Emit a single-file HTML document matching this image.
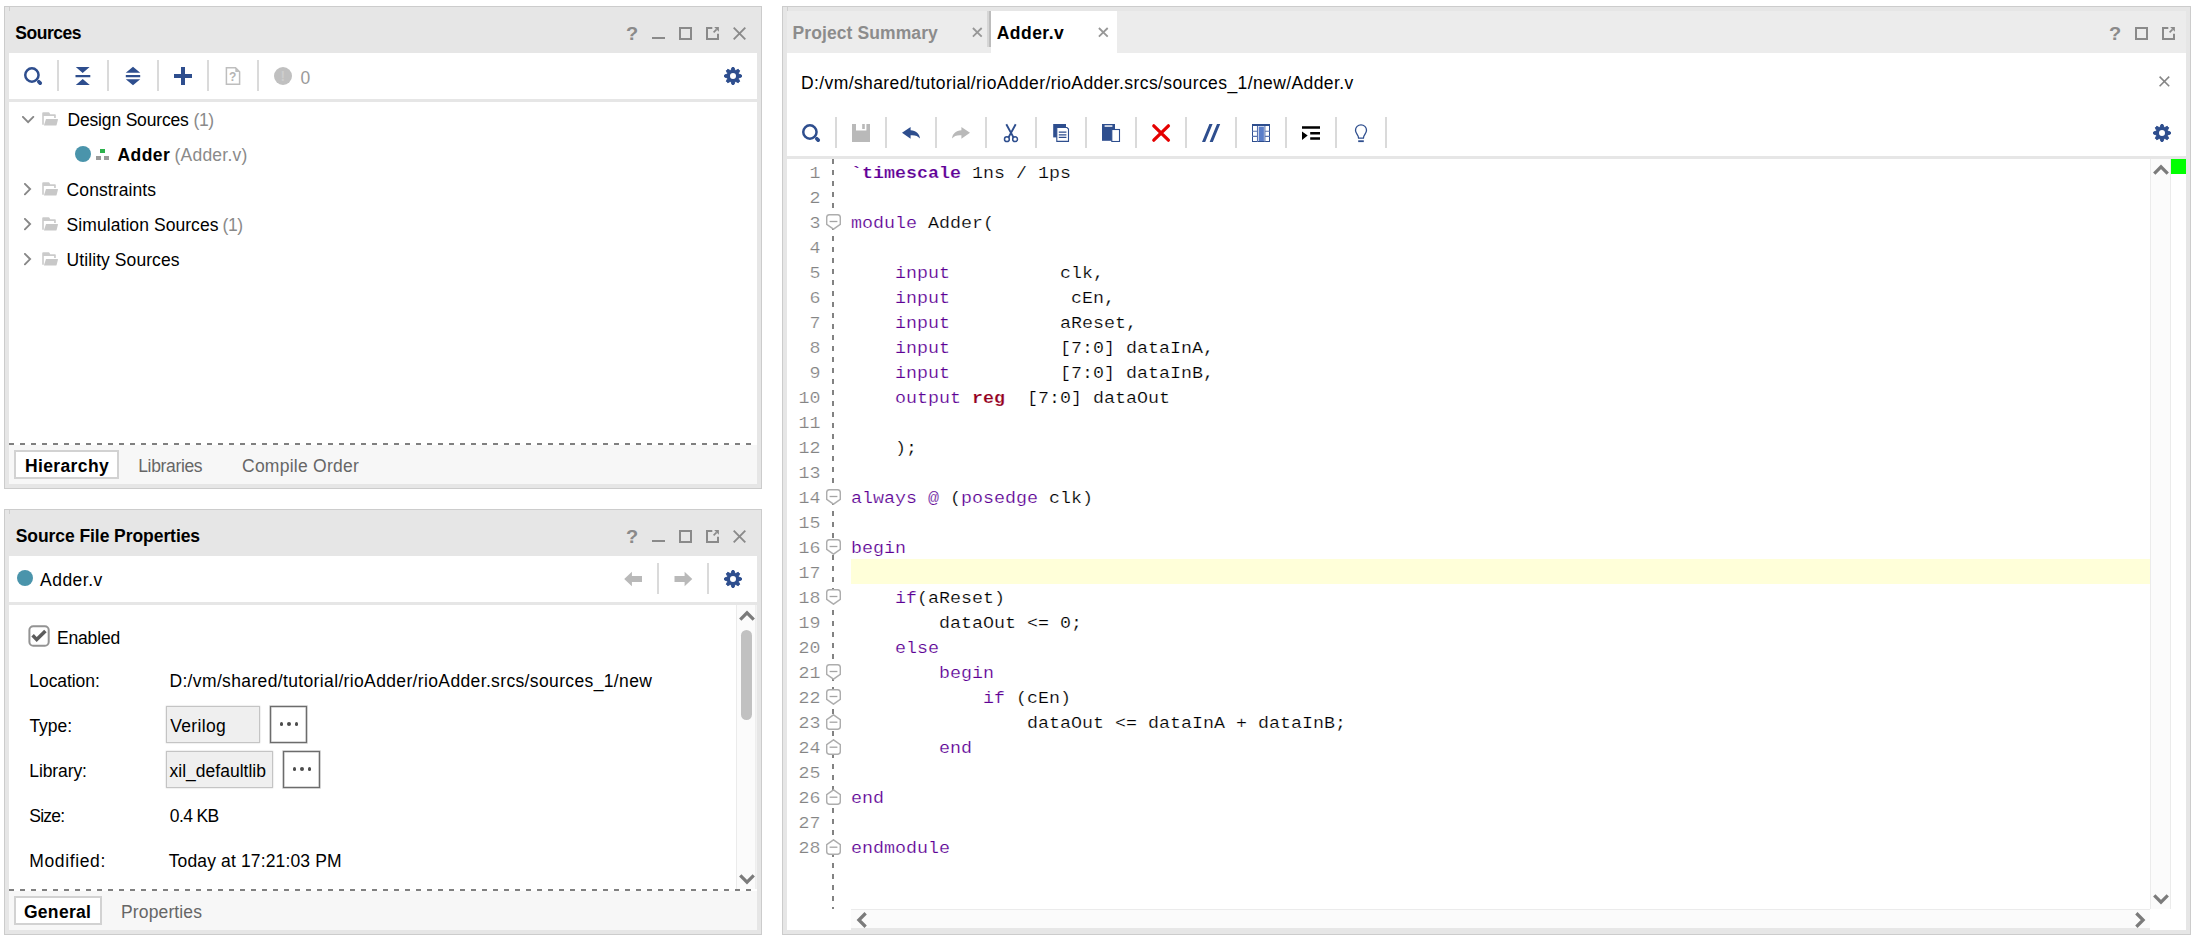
<!DOCTYPE html>
<html><head><meta charset="utf-8"><title>Vivado</title><style>
html,body{margin:0;padding:0;background:#fff}
body{width:2194px;height:942px;position:relative;overflow:hidden;font-family:"Liberation Sans", sans-serif;font-size:17.5px}
.panel{position:absolute;box-sizing:border-box;border:1px solid #cccccc;background:#e6e6e6}
.t{position:absolute;white-space:pre;line-height:24px;font-size:17.5px}
.q{position:absolute;font-weight:bold;font-size:18.5px;line-height:21px;color:#8a8a8a;width:14px;text-align:center;transform:scaleX(1.08)}
.hdash{position:absolute;height:2px;background:repeating-linear-gradient(90deg,#808080 0,#808080 5px,transparent 5px,transparent 11px)}
.vdash{position:absolute;left:832px;top:159px;width:2px;height:750px;background:repeating-linear-gradient(180deg,#828282 0,#828282 5px,transparent 5px,transparent 11px)}
.cl{margin:0;position:absolute;white-space:pre;font-family:"Liberation Mono", monospace;font-size:18.333px;line-height:20px;height:20px;transform:scaleY(0.86);transform-origin:0 0;-webkit-text-stroke:0.22px #fff}
.ln{left:787.5px;width:33px;text-align:right;color:#848484}
.code{left:851px;color:#000}
.k{color:#5c0094}
.kb{color:#5f0096;font-weight:bold;-webkit-text-stroke:0.2px #fff}
.r{color:#94001f;font-weight:bold;-webkit-text-stroke:0.2px #fff}
</style></head>
<body>
<div class="panel" style="left:4px;top:6px;width:758px;height:483px"></div>
<div style="position:absolute;left:9px;top:53px;width:748px;height:46px;background:#fff;"></div>
<div style="position:absolute;left:9px;top:102px;width:748px;height:343px;background:#fff;"></div>
<div style="position:absolute;left:9px;top:445px;width:748px;height:39px;background:#f7f7f7;"></div>
<div class="hdash" style="left:9px;top:443px;width:748px"></div>
<div style="position:absolute;left:14px;top:450px;width:105px;height:29px;background:#fff;box-sizing:border-box;border:2px solid #d2d2d2"></div>
<div style="position:absolute;left:9px;top:7px;width:1px;height:4px;background:#cfcfcf;"></div>
<div class="q" style="left:624.5px;top:23px">?</div>
<div style="position:absolute;left:652px;top:37.25px;width:13px;height:2px;background:#8a8a8a"></div>
<div style="position:absolute;left:679px;top:27px;width:13px;height:13px;box-sizing:border-box;border:2px solid #8a8a8a"></div>
<svg style="position:absolute;left:706px;top:27px" width="14" height="14" viewBox="0 0 14 14"><path d="M6.3 1H1V12H12V6.7" fill="none" stroke="#8a8a8a" stroke-width="2"/><path d="M7.6 5.4L10.6 2.4" stroke="#8a8a8a" stroke-width="1.7" fill="none"/><path d="M8.2 0.1H12.9V4.8Z" fill="#8a8a8a"/></svg>
<svg style="position:absolute;left:733px;top:27px" width="14" height="14" viewBox="0 0 14 14"><path d="M0.7 0.7L12.3 12.3M12.3 0.7L0.7 12.3" stroke="#8a8a8a" stroke-width="1.9" fill="none"/></svg>
<svg style="position:absolute;left:24px;top:67px" width="19" height="19" viewBox="0 0 19 19"><circle cx="7.9" cy="8" r="6.65" fill="none" stroke="#2e4e8e" stroke-width="2.5"/><path d="M14.8 14.7L16.2 16.1" stroke="#2e4e8e" stroke-width="3.7" stroke-linecap="round"/></svg>
<div style="position:absolute;left:57.0px;top:60.0px;width:2px;height:31.0px;background:#dadada"></div>
<div style="position:absolute;left:107.0px;top:60.0px;width:2px;height:31.0px;background:#dadada"></div>
<div style="position:absolute;left:157.0px;top:60.0px;width:2px;height:31.0px;background:#dadada"></div>
<div style="position:absolute;left:207.0px;top:60.0px;width:2px;height:31.0px;background:#dadada"></div>
<div style="position:absolute;left:257.0px;top:60.0px;width:2px;height:31.0px;background:#dadada"></div>
<svg style="position:absolute;left:75px;top:66px" width="16" height="20" viewBox="0 0 16 20"><path d="M0.8 1H14.6L7.7 7Z M0.5 9H15.3V11.2H0.5Z M7.7 13L14.8 19H0.8Z" fill="#2e4e8e"/></svg>
<svg style="position:absolute;left:125px;top:66px" width="16" height="20" viewBox="0 0 16 20"><path d="M8 0.8L15.2 6.8H0.8Z M0.8 9H15.2V11.2H0.8Z M0.8 13.2H15.2L8 19.2Z" fill="#2e4e8e"/></svg>
<svg style="position:absolute;left:174px;top:67px" width="18" height="18" viewBox="0 0 18 18"><path d="M7 0H11V7H18V11H11V18H7V11H0V7H7Z" fill="#2e4e8e"/></svg>
<svg style="position:absolute;left:225px;top:66px" width="16" height="20" viewBox="0 0 16 20"><path d="M1.4 1.7H10.5L14.6 5.8V18.3H1.4Z" fill="#fff" stroke="#bebebe" stroke-width="1.5"/><path d="M10.3 1.5V6H14.8Z" fill="#bebebe"/></svg>
<div class="t" style="left:229px;top:69px;font-size:12px;line-height:16px;color:#b4b4b4;font-weight:bold">?</div>
<div style="position:absolute;left:274px;top:67px;width:18px;height:18px;border-radius:9px;background:#c0c0c0"></div>
<div class="t" style="left:280.5px;top:68px;font-size:14px;line-height:16px;color:#cdcdcd;font-weight:bold">!</div>
<svg style="position:absolute;left:724px;top:67px" width="18" height="18" viewBox="0 0 18 18"><path d="M7.05 3.33L8.04 0.55L9.96 0.55L10.95 3.33L11.63 3.61L14.29 2.35L15.65 3.71L14.39 6.37L14.67 7.05L17.45 8.04L17.45 9.96L14.67 10.95L14.39 11.63L15.65 14.29L14.29 15.65L11.63 14.39L10.95 14.67L9.96 17.45L8.04 17.45L7.05 14.67L6.37 14.39L3.71 15.65L2.35 14.29L3.61 11.63L3.33 10.95L0.55 9.96L0.55 8.04L3.33 7.05L3.61 6.37L2.35 3.71L3.71 2.35L6.37 3.61Z M9 6A3 3 0 1 0 9 12A3 3 0 1 0 9 6Z" fill="#2e4e8e" fill-rule="evenodd"/><path d="M7.05 3.33L8.04 0.55L9.96 0.55L10.95 3.33L11.63 3.61L14.29 2.35L15.65 3.71L14.39 6.37L14.67 7.05L17.45 8.04L17.45 9.96L14.67 10.95L14.39 11.63L15.65 14.29L14.29 15.65L11.63 14.39L10.95 14.67L9.96 17.45L8.04 17.45L7.05 14.67L6.37 14.39L3.71 15.65L2.35 14.29L3.61 11.63L3.33 10.95L0.55 9.96L0.55 8.04L3.33 7.05L3.61 6.37L2.35 3.71L3.71 2.35L6.37 3.61Z" fill="none" stroke="#2e4e8e" stroke-width="1" stroke-linejoin="round"/></svg>
<svg style="position:absolute;left:21.7px;top:115.8px" width="13" height="9"><path d="M0.9 0.9L6.1 6.1L11.3 0.9" fill="none" stroke="#878787" stroke-width="1.9" stroke-linecap="round"/></svg>
<svg style="position:absolute;left:42px;top:112px" width="17" height="14" viewBox="0 0 17 14"><path d="M0.2 1.2Q0.2 0.2 1.2 0.2H6.6Q7.3 0.2 7.6 0.9L8.2 2.3H13Q13.8 2.3 13.8 3.1V5.9H12.1V3.9H1.8V12.8H0.2Z" fill="#cbcbcb"/><path d="M4 7H15.6Q16.2 7 16 7.6L14.6 13Q14.4 13.6 13.8 13.6H1.9Z" fill="#c8c8c8"/></svg>
<svg style="position:absolute;left:24.2px;top:183.3px" width="9" height="13"><path d="M0.9 0.9L6.1 6.1L0.9 11.3" fill="none" stroke="#878787" stroke-width="1.9" stroke-linecap="round"/></svg>
<svg style="position:absolute;left:42px;top:182px" width="17" height="14" viewBox="0 0 17 14"><path d="M0.2 1.2Q0.2 0.2 1.2 0.2H6.6Q7.3 0.2 7.6 0.9L8.2 2.3H13Q13.8 2.3 13.8 3.1V5.9H12.1V3.9H1.8V12.8H0.2Z" fill="#cbcbcb"/><path d="M4 7H15.6Q16.2 7 16 7.6L14.6 13Q14.4 13.6 13.8 13.6H1.9Z" fill="#c8c8c8"/></svg>
<svg style="position:absolute;left:24.2px;top:218.3px" width="9" height="13"><path d="M0.9 0.9L6.1 6.1L0.9 11.3" fill="none" stroke="#878787" stroke-width="1.9" stroke-linecap="round"/></svg>
<svg style="position:absolute;left:42px;top:217px" width="17" height="14" viewBox="0 0 17 14"><path d="M0.2 1.2Q0.2 0.2 1.2 0.2H6.6Q7.3 0.2 7.6 0.9L8.2 2.3H13Q13.8 2.3 13.8 3.1V5.9H12.1V3.9H1.8V12.8H0.2Z" fill="#cbcbcb"/><path d="M4 7H15.6Q16.2 7 16 7.6L14.6 13Q14.4 13.6 13.8 13.6H1.9Z" fill="#c8c8c8"/></svg>
<svg style="position:absolute;left:24.2px;top:253.3px" width="9" height="13"><path d="M0.9 0.9L6.1 6.1L0.9 11.3" fill="none" stroke="#878787" stroke-width="1.9" stroke-linecap="round"/></svg>
<svg style="position:absolute;left:42px;top:252px" width="17" height="14" viewBox="0 0 17 14"><path d="M0.2 1.2Q0.2 0.2 1.2 0.2H6.6Q7.3 0.2 7.6 0.9L8.2 2.3H13Q13.8 2.3 13.8 3.1V5.9H12.1V3.9H1.8V12.8H0.2Z" fill="#cbcbcb"/><path d="M4 7H15.6Q16.2 7 16 7.6L14.6 13Q14.4 13.6 13.8 13.6H1.9Z" fill="#c8c8c8"/></svg>
<div style="position:absolute;left:75px;top:146px;width:16px;height:16px;border-radius:8px;background:#4a94ab"></div>
<div style="position:absolute;left:100px;top:149px;width:5.3px;height:4.2px;background:#2db24c;"></div>
<div style="position:absolute;left:96px;top:155.6px;width:5.2px;height:4.4px;background:#9a9a9a;"></div>
<div style="position:absolute;left:104px;top:155.6px;width:5.2px;height:4.4px;background:#9a9a9a;"></div>
<div class="panel" style="left:4px;top:509px;width:758px;height:426px"></div>
<div style="position:absolute;left:9px;top:556px;width:748px;height:46px;background:#fff;"></div>
<div style="position:absolute;left:9px;top:605px;width:748px;height:286px;background:#fff;"></div>
<div style="position:absolute;left:9px;top:891px;width:748px;height:39px;background:#f7f7f7;"></div>
<div class="hdash" style="left:9px;top:889px;width:748px"></div>
<div style="position:absolute;left:14px;top:896px;width:88px;height:29px;background:#fff;box-sizing:border-box;border:2px solid #d2d2d2"></div>
<div style="position:absolute;left:9px;top:510px;width:1px;height:4px;background:#cfcfcf;"></div>
<div class="q" style="left:624.5px;top:526px">?</div>
<div style="position:absolute;left:652px;top:540.25px;width:13px;height:2px;background:#8a8a8a"></div>
<div style="position:absolute;left:679px;top:530px;width:13px;height:13px;box-sizing:border-box;border:2px solid #8a8a8a"></div>
<svg style="position:absolute;left:706px;top:530px" width="14" height="14" viewBox="0 0 14 14"><path d="M6.3 1H1V12H12V6.7" fill="none" stroke="#8a8a8a" stroke-width="2"/><path d="M7.6 5.4L10.6 2.4" stroke="#8a8a8a" stroke-width="1.7" fill="none"/><path d="M8.2 0.1H12.9V4.8Z" fill="#8a8a8a"/></svg>
<svg style="position:absolute;left:733px;top:530px" width="14" height="14" viewBox="0 0 14 14"><path d="M0.7 0.7L12.3 12.3M12.3 0.7L0.7 12.3" stroke="#8a8a8a" stroke-width="1.9" fill="none"/></svg>
<div style="position:absolute;left:17px;top:570px;width:16px;height:16px;border-radius:8px;background:#4a94ab"></div>
<svg style="position:absolute;left:624px;top:571px" width="19" height="16" viewBox="0 0 19 16"><path d="M0.2 8L7.9 0.8V4.9H18V11.1H7.9V15.2Z" fill="#b9b9b9"/></svg>
<svg style="position:absolute;left:674px;top:571px" width="19" height="16" viewBox="0 0 19 16"><path d="M18.3 8L10.6 0.8V4.9H0.5V11.1H10.6V15.2Z" fill="#b9b9b9"/></svg>
<div style="position:absolute;left:657.0px;top:563.0px;width:2px;height:31.0px;background:#dadada"></div>
<div style="position:absolute;left:707.0px;top:563.0px;width:2px;height:31.0px;background:#dadada"></div>
<svg style="position:absolute;left:724px;top:570px" width="18" height="18" viewBox="0 0 18 18"><path d="M7.05 3.33L8.04 0.55L9.96 0.55L10.95 3.33L11.63 3.61L14.29 2.35L15.65 3.71L14.39 6.37L14.67 7.05L17.45 8.04L17.45 9.96L14.67 10.95L14.39 11.63L15.65 14.29L14.29 15.65L11.63 14.39L10.95 14.67L9.96 17.45L8.04 17.45L7.05 14.67L6.37 14.39L3.71 15.65L2.35 14.29L3.61 11.63L3.33 10.95L0.55 9.96L0.55 8.04L3.33 7.05L3.61 6.37L2.35 3.71L3.71 2.35L6.37 3.61Z M9 6A3 3 0 1 0 9 12A3 3 0 1 0 9 6Z" fill="#2e4e8e" fill-rule="evenodd"/><path d="M7.05 3.33L8.04 0.55L9.96 0.55L10.95 3.33L11.63 3.61L14.29 2.35L15.65 3.71L14.39 6.37L14.67 7.05L17.45 8.04L17.45 9.96L14.67 10.95L14.39 11.63L15.65 14.29L14.29 15.65L11.63 14.39L10.95 14.67L9.96 17.45L8.04 17.45L7.05 14.67L6.37 14.39L3.71 15.65L2.35 14.29L3.61 11.63L3.33 10.95L0.55 9.96L0.55 8.04L3.33 7.05L3.61 6.37L2.35 3.71L3.71 2.35L6.37 3.61Z" fill="none" stroke="#2e4e8e" stroke-width="1" stroke-linejoin="round"/></svg>
<div style="position:absolute;left:736px;top:605px;width:20px;height:284px;background:#fbfbfb;box-sizing:border-box;border-left:1px solid #ebebeb;border-right:1px solid #eeeeee"></div>
<div style="position:absolute;left:756px;top:605px;width:1px;height:284px;background:#f2f2f2;"></div>
<svg style="position:absolute;left:739px;top:610px" width="16" height="11"><path d="M1.25 9.65L8 2.9L14.75 9.65" fill="none" stroke="#7b7b7b" stroke-width="3.25"/></svg>
<svg style="position:absolute;left:739px;top:874px" width="16" height="11"><path d="M1.25 1.35L8 8.1L14.75 1.35" fill="none" stroke="#7b7b7b" stroke-width="3.25"/></svg>
<div style="position:absolute;left:740.6px;top:630.4px;width:11.9px;height:89.6px;background:#c1c1c1;border-radius:6px"></div>
<svg style="position:absolute;left:28px;top:625px" width="22" height="22" viewBox="0 0 22 22"><rect x="1.4" y="1.3" width="19.3" height="19.4" rx="3.8" ry="3.8" fill="#fff" stroke="#939393" stroke-width="2"/><path d="M4.6 10.3L8.7 14.6L17.4 5.9" fill="none" stroke="#5c5c5c" stroke-width="3.5"/></svg>
<div style="position:absolute;left:166px;top:706px;width:94px;height:37px;background:#efefef;box-sizing:border-box;border:1px solid #c4c4c4;box-shadow:0 0 1.5px rgba(0,0,0,0.22)"></div>
<div style="position:absolute;left:166px;top:751px;width:107px;height:37px;background:#efefef;box-sizing:border-box;border:1px solid #c4c4c4;box-shadow:0 0 1.5px rgba(0,0,0,0.22)"></div>
<div style="position:absolute;left:270px;top:706px;width:37px;height:37px;background:#fff;box-sizing:border-box;border:1px solid #6c6c6c;box-shadow:0 0 0 0.6px rgba(108,108,108,0.5), inset 0 0 0 0.6px rgba(108,108,108,0.5)"></div>
<div style="position:absolute;left:279.8px;top:722.4px;width:3.2px;height:3.2px;border-radius:2px;background:#4c4c4c"></div>
<div style="position:absolute;left:287.4px;top:722.4px;width:3.2px;height:3.2px;border-radius:2px;background:#4c4c4c"></div>
<div style="position:absolute;left:295.1px;top:722.4px;width:3.2px;height:3.2px;border-radius:2px;background:#4c4c4c"></div>
<div style="position:absolute;left:283px;top:751px;width:37px;height:37px;background:#fff;box-sizing:border-box;border:1px solid #6c6c6c;box-shadow:0 0 0 0.6px rgba(108,108,108,0.5), inset 0 0 0 0.6px rgba(108,108,108,0.5)"></div>
<div style="position:absolute;left:292.8px;top:767.4px;width:3.2px;height:3.2px;border-radius:2px;background:#4c4c4c"></div>
<div style="position:absolute;left:300.4px;top:767.4px;width:3.2px;height:3.2px;border-radius:2px;background:#4c4c4c"></div>
<div style="position:absolute;left:308.1px;top:767.4px;width:3.2px;height:3.2px;border-radius:2px;background:#4c4c4c"></div>
<div class="panel" style="left:782px;top:6px;width:1409px;height:929px"></div>
<div style="position:absolute;left:787px;top:11px;width:1399px;height:42px;background:#ececec;"></div>
<div style="position:absolute;left:987px;top:11px;width:2px;height:36px;background:#d6d6d6;"></div>
<div style="position:absolute;left:989px;top:11px;width:2px;height:36px;background:#bcbcbc;"></div>
<div style="position:absolute;left:991px;top:11px;width:126px;height:42px;background:#fff;"></div>
<div style="position:absolute;left:787px;top:53px;width:1399px;height:103px;background:#fff;"></div>
<div style="position:absolute;left:787px;top:159px;width:1399px;height:771px;background:#fff;"></div>
<div style="position:absolute;left:787px;top:7px;width:1px;height:4px;background:#cfcfcf;"></div>
<div class="q" style="left:2107.5px;top:23px">?</div>
<div style="position:absolute;left:2135px;top:27px;width:13px;height:13px;box-sizing:border-box;border:2px solid #8a8a8a"></div>
<svg style="position:absolute;left:2162px;top:27px" width="14" height="14" viewBox="0 0 14 14"><path d="M6.3 1H1V12H12V6.7" fill="none" stroke="#8a8a8a" stroke-width="2"/><path d="M7.6 5.4L10.6 2.4" stroke="#8a8a8a" stroke-width="1.7" fill="none"/><path d="M8.2 0.1H12.9V4.8Z" fill="#8a8a8a"/></svg>
<svg style="position:absolute;left:971.9px;top:27px" width="11" height="11" viewBox="0 0 11 11"><path d="M0.9 1L9.7 9.6M9.7 1L0.9 9.6" stroke="#979797" stroke-width="1.8" fill="none"/></svg>
<svg style="position:absolute;left:1097.9px;top:27px" width="11" height="11" viewBox="0 0 11 11"><path d="M0.9 1L9.7 9.6M9.7 1L0.9 9.6" stroke="#979797" stroke-width="1.8" fill="none"/></svg>
<svg style="position:absolute;left:2159px;top:76px" width="11" height="11" viewBox="0 0 11 11"><path d="M0.6 0.6L10.2 10.2M10.2 0.6L0.6 10.2" stroke="#868686" stroke-width="1.6" fill="none"/></svg>
<svg style="position:absolute;left:802px;top:124px" width="19" height="19" viewBox="0 0 19 19"><circle cx="7.9" cy="8" r="6.65" fill="none" stroke="#2e4e8e" stroke-width="2.5"/><path d="M14.8 14.7L16.2 16.1" stroke="#2e4e8e" stroke-width="3.7" stroke-linecap="round"/></svg>
<div style="position:absolute;left:835.0px;top:117.0px;width:2px;height:31.0px;background:#dadada"></div>
<div style="position:absolute;left:885.0px;top:117.0px;width:2px;height:31.0px;background:#dadada"></div>
<div style="position:absolute;left:935.0px;top:117.0px;width:2px;height:31.0px;background:#dadada"></div>
<div style="position:absolute;left:985.0px;top:117.0px;width:2px;height:31.0px;background:#dadada"></div>
<div style="position:absolute;left:1035.0px;top:117.0px;width:2px;height:31.0px;background:#dadada"></div>
<div style="position:absolute;left:1085.0px;top:117.0px;width:2px;height:31.0px;background:#dadada"></div>
<div style="position:absolute;left:1135.0px;top:117.0px;width:2px;height:31.0px;background:#dadada"></div>
<div style="position:absolute;left:1185.0px;top:117.0px;width:2px;height:31.0px;background:#dadada"></div>
<div style="position:absolute;left:1235.0px;top:117.0px;width:2px;height:31.0px;background:#dadada"></div>
<div style="position:absolute;left:1285.0px;top:117.0px;width:2px;height:31.0px;background:#dadada"></div>
<div style="position:absolute;left:1335.0px;top:117.0px;width:2px;height:31.0px;background:#dadada"></div>
<div style="position:absolute;left:1385.0px;top:117.0px;width:2px;height:31.0px;background:#dadada"></div>
<svg style="position:absolute;left:2153px;top:124px" width="18" height="18" viewBox="0 0 18 18"><path d="M7.05 3.33L8.04 0.55L9.96 0.55L10.95 3.33L11.63 3.61L14.29 2.35L15.65 3.71L14.39 6.37L14.67 7.05L17.45 8.04L17.45 9.96L14.67 10.95L14.39 11.63L15.65 14.29L14.29 15.65L11.63 14.39L10.95 14.67L9.96 17.45L8.04 17.45L7.05 14.67L6.37 14.39L3.71 15.65L2.35 14.29L3.61 11.63L3.33 10.95L0.55 9.96L0.55 8.04L3.33 7.05L3.61 6.37L2.35 3.71L3.71 2.35L6.37 3.61Z M9 6A3 3 0 1 0 9 12A3 3 0 1 0 9 6Z" fill="#2e4e8e" fill-rule="evenodd"/><path d="M7.05 3.33L8.04 0.55L9.96 0.55L10.95 3.33L11.63 3.61L14.29 2.35L15.65 3.71L14.39 6.37L14.67 7.05L17.45 8.04L17.45 9.96L14.67 10.95L14.39 11.63L15.65 14.29L14.29 15.65L11.63 14.39L10.95 14.67L9.96 17.45L8.04 17.45L7.05 14.67L6.37 14.39L3.71 15.65L2.35 14.29L3.61 11.63L3.33 10.95L0.55 9.96L0.55 8.04L3.33 7.05L3.61 6.37L2.35 3.71L3.71 2.35L6.37 3.61Z" fill="none" stroke="#2e4e8e" stroke-width="1" stroke-linejoin="round"/></svg>
<svg style="position:absolute;left:852px;top:124px" width="18" height="18" viewBox="0 0 18 18"><path d="M0 0H4V6.5H14.4V0H18V18H0Z M10.2 0H12.8V5H10.2Z" fill="#b9b9b9"/></svg>
<svg style="position:absolute;left:901px;top:126px" width="20" height="14" viewBox="0 0 20 14"><path d="M1 6.8L9.6 1V4.3C15 4.6 18.6 8 19 12.6C17 9.8 14 8.9 9.6 9.2V12.7Z" fill="#2e4e8e"/></svg>
<svg style="position:absolute;left:951px;top:126px" width="20" height="14" viewBox="0 0 20 14"><path d="M19 6.8L10.4 1V4.3C5 4.6 1.4 8 1 12.6C3 9.8 6 8.9 10.4 9.2V12.7Z" fill="#b9b9b9"/></svg>
<svg style="position:absolute;left:1003px;top:123px" width="16" height="20" viewBox="0 0 16 20"><path d="M3.3 1.2L10.6 14.6M12.7 1.2L5.4 14.6" stroke="#2e4e8e" stroke-width="1.9" fill="none"/><circle cx="3.9" cy="16.2" r="2.4" fill="none" stroke="#2e4e8e" stroke-width="1.5"/><circle cx="12.1" cy="16.2" r="2.4" fill="none" stroke="#2e4e8e" stroke-width="1.5"/></svg>
<svg style="position:absolute;left:1053px;top:124px" width="17" height="18" viewBox="0 0 17 18"><rect x="0.2" y="0" width="12.8" height="13.4" fill="#2e4e8e"/><path d="M3.8 3.5H14L15.5 5V17.4H3.8Z" fill="#fff" stroke="#2e4e8e" stroke-width="1.1"/><path d="M5.8 8.2H13.4M5.8 10.8H13.4M5.8 13.4H13.4" stroke="#2e4e8e" stroke-width="1.3"/></svg>
<svg style="position:absolute;left:1102px;top:124px" width="19" height="18" viewBox="0 0 19 18"><rect x="0" y="0" width="13" height="16.8" fill="#2e4e8e"/><rect x="2.6" y="1.2" width="7.8" height="1.7" fill="#dfe4ee"/><rect x="9.8" y="5.5" width="7.7" height="12" fill="#fff" stroke="#2e4e8e" stroke-width="1.1"/></svg>
<svg style="position:absolute;left:1151px;top:123px" width="20" height="20" viewBox="0 0 20 20"><path d="M2.8 2.8L17.4 17.2M17.4 2.8L2.8 17.2" stroke="#e50000" stroke-width="3.3" stroke-linecap="round" fill="none"/></svg>
<svg style="position:absolute;left:1201px;top:124px" width="20" height="18" viewBox="0 0 20 18"><path d="M8.4 0H11.6L4.2 18H1Z M16 0H19.2L11.8 18H8.6Z" fill="#2e4e8e"/></svg>
<svg style="position:absolute;left:1252px;top:124px" width="18" height="18" viewBox="0 0 18 18"><rect x="0.5" y="0.5" width="17" height="17" fill="#fff" stroke="#2e4e8e" stroke-width="1"/><rect x="0" y="0" width="18" height="2" fill="#2e4e8e"/><rect x="6.7" y="2.6" width="5.2" height="14.4" fill="#5b7ec9"/><path d="M5.5 2V18M12.9 2V18M0 7.2H5.5M0 12.4H5.5M12.9 7.2H18M12.9 12.4H18" stroke="#5a74b0" stroke-width="1.1" fill="none"/></svg>
<svg style="position:absolute;left:1302px;top:126px" width="18" height="14" viewBox="0 0 18 14"><path d="M0 0.2H18V2.8H0Z M8.2 5.9H18V8.5H8.2Z M8.2 11.2H18V13.8H8.2Z M0 5.4L5.7 9.6L0 13.9Z" fill="#000"/></svg>
<svg style="position:absolute;left:1354px;top:123.5px" width="14" height="19" viewBox="0 0 14 19"><path d="M4.6 14.2C4.6 11 1.5 9.8 1.5 6.3A5.5 5.5 0 0 1 12.5 6.3C12.5 9.8 9.4 11 9.4 14.2Z" fill="none" stroke="#2e4e8e" stroke-width="1.3"/><path d="M4.2 17.2H9.8" stroke="#2e4e8e" stroke-width="1.8"/></svg>
<div style="position:absolute;left:851px;top:559px;width:1299px;height:25px;background:#ffffd9;"></div>
<div class="vdash"></div>
<svg style="position:absolute;left:826px;top:214px" width="15" height="16" viewBox="0 0 15 16"><path d="M3.4 0.7H11.6Q14.3 0.7 14.3 3.4V10.3L7.5 15.2L0.7 10.3V3.4Q0.7 0.7 3.4 0.7Z" fill="#fff" stroke="#adadad" stroke-width="1.45"/><path d="M3.6 7.5H11.4" stroke="#a4a4a4" stroke-width="1.3"/></svg>
<svg style="position:absolute;left:826px;top:489px" width="15" height="16" viewBox="0 0 15 16"><path d="M3.4 0.7H11.6Q14.3 0.7 14.3 3.4V10.3L7.5 15.2L0.7 10.3V3.4Q0.7 0.7 3.4 0.7Z" fill="#fff" stroke="#adadad" stroke-width="1.45"/><path d="M3.6 7.5H11.4" stroke="#a4a4a4" stroke-width="1.3"/></svg>
<svg style="position:absolute;left:826px;top:539px" width="15" height="16" viewBox="0 0 15 16"><path d="M3.4 0.7H11.6Q14.3 0.7 14.3 3.4V10.3L7.5 15.2L0.7 10.3V3.4Q0.7 0.7 3.4 0.7Z" fill="#fff" stroke="#adadad" stroke-width="1.45"/><path d="M3.6 7.5H11.4" stroke="#a4a4a4" stroke-width="1.3"/></svg>
<svg style="position:absolute;left:826px;top:589px" width="15" height="16" viewBox="0 0 15 16"><path d="M3.4 0.7H11.6Q14.3 0.7 14.3 3.4V10.3L7.5 15.2L0.7 10.3V3.4Q0.7 0.7 3.4 0.7Z" fill="#fff" stroke="#adadad" stroke-width="1.45"/><path d="M3.6 7.5H11.4" stroke="#a4a4a4" stroke-width="1.3"/></svg>
<svg style="position:absolute;left:826px;top:664px" width="15" height="16" viewBox="0 0 15 16"><path d="M3.4 0.7H11.6Q14.3 0.7 14.3 3.4V10.3L7.5 15.2L0.7 10.3V3.4Q0.7 0.7 3.4 0.7Z" fill="#fff" stroke="#adadad" stroke-width="1.45"/><path d="M3.6 7.5H11.4" stroke="#a4a4a4" stroke-width="1.3"/></svg>
<svg style="position:absolute;left:826px;top:689px" width="15" height="16" viewBox="0 0 15 16"><path d="M3.4 0.7H11.6Q14.3 0.7 14.3 3.4V10.3L7.5 15.2L0.7 10.3V3.4Q0.7 0.7 3.4 0.7Z" fill="#fff" stroke="#adadad" stroke-width="1.45"/><path d="M3.6 7.5H11.4" stroke="#a4a4a4" stroke-width="1.3"/></svg>
<svg style="position:absolute;left:826px;top:714px" width="15" height="16" viewBox="0 0 15 16"><path d="M3.4 15.3H11.6Q14.3 15.3 14.3 12.6V5.7L7.5 0.8L0.7 5.7V12.6Q0.7 15.3 3.4 15.3Z" fill="#fff" stroke="#adadad" stroke-width="1.45"/><path d="M3.6 8.2H11.4" stroke="#a4a4a4" stroke-width="1.3"/></svg>
<svg style="position:absolute;left:826px;top:739px" width="15" height="16" viewBox="0 0 15 16"><path d="M3.4 15.3H11.6Q14.3 15.3 14.3 12.6V5.7L7.5 0.8L0.7 5.7V12.6Q0.7 15.3 3.4 15.3Z" fill="#fff" stroke="#adadad" stroke-width="1.45"/><path d="M3.6 8.2H11.4" stroke="#a4a4a4" stroke-width="1.3"/></svg>
<svg style="position:absolute;left:826px;top:789px" width="15" height="16" viewBox="0 0 15 16"><path d="M3.4 15.3H11.6Q14.3 15.3 14.3 12.6V5.7L7.5 0.8L0.7 5.7V12.6Q0.7 15.3 3.4 15.3Z" fill="#fff" stroke="#adadad" stroke-width="1.45"/><path d="M3.6 8.2H11.4" stroke="#a4a4a4" stroke-width="1.3"/></svg>
<svg style="position:absolute;left:826px;top:839px" width="15" height="16" viewBox="0 0 15 16"><path d="M3.4 15.3H11.6Q14.3 15.3 14.3 12.6V5.7L7.5 0.8L0.7 5.7V12.6Q0.7 15.3 3.4 15.3Z" fill="#fff" stroke="#adadad" stroke-width="1.45"/><path d="M3.6 8.2H11.4" stroke="#a4a4a4" stroke-width="1.3"/></svg>
<div class="cl ln" style="top:166.10px">1</div>
<div class="cl code" style="top:166.10px"><span class="kb">`timescale</span> 1ns / 1ps</div>
<div class="cl ln" style="top:191.10px">2</div>
<div class="cl ln" style="top:216.10px">3</div>
<div class="cl code" style="top:216.10px"><span class="k">module</span> Adder(</div>
<div class="cl ln" style="top:241.10px">4</div>
<div class="cl ln" style="top:266.10px">5</div>
<div class="cl code" style="top:266.10px">    <span class="k">input</span>          clk,</div>
<div class="cl ln" style="top:291.10px">6</div>
<div class="cl code" style="top:291.10px">    <span class="k">input</span>           cEn,</div>
<div class="cl ln" style="top:316.10px">7</div>
<div class="cl code" style="top:316.10px">    <span class="k">input</span>          aReset,</div>
<div class="cl ln" style="top:341.10px">8</div>
<div class="cl code" style="top:341.10px">    <span class="k">input</span>          [7:0] dataInA,</div>
<div class="cl ln" style="top:366.10px">9</div>
<div class="cl code" style="top:366.10px">    <span class="k">input</span>          [7:0] dataInB,</div>
<div class="cl ln" style="top:391.10px">10</div>
<div class="cl code" style="top:391.10px">    <span class="k">output</span> <span class="r">reg</span>  [7:0] dataOut</div>
<div class="cl ln" style="top:416.10px">11</div>
<div class="cl ln" style="top:441.10px">12</div>
<div class="cl code" style="top:441.10px">    );</div>
<div class="cl ln" style="top:466.10px">13</div>
<div class="cl ln" style="top:491.10px">14</div>
<div class="cl code" style="top:491.10px"><span class="k">always @</span> (<span class="k">posedge</span> clk)</div>
<div class="cl ln" style="top:516.10px">15</div>
<div class="cl ln" style="top:541.10px">16</div>
<div class="cl code" style="top:541.10px"><span class="k">begin</span></div>
<div class="cl ln" style="top:566.10px">17</div>
<div class="cl ln" style="top:591.10px">18</div>
<div class="cl code" style="top:591.10px">    <span class="k">if</span>(aReset)</div>
<div class="cl ln" style="top:616.10px">19</div>
<div class="cl code" style="top:616.10px">        dataOut &lt;= 0;</div>
<div class="cl ln" style="top:641.10px">20</div>
<div class="cl code" style="top:641.10px">    <span class="k">else</span></div>
<div class="cl ln" style="top:666.10px">21</div>
<div class="cl code" style="top:666.10px">        <span class="k">begin</span></div>
<div class="cl ln" style="top:691.10px">22</div>
<div class="cl code" style="top:691.10px">            <span class="k">if</span> (cEn)</div>
<div class="cl ln" style="top:716.10px">23</div>
<div class="cl code" style="top:716.10px">                dataOut &lt;= dataInA + dataInB;</div>
<div class="cl ln" style="top:741.10px">24</div>
<div class="cl code" style="top:741.10px">        <span class="k">end</span></div>
<div class="cl ln" style="top:766.10px">25</div>
<div class="cl ln" style="top:791.10px">26</div>
<div class="cl code" style="top:791.10px"><span class="k">end</span></div>
<div class="cl ln" style="top:816.10px">27</div>
<div class="cl ln" style="top:841.10px">28</div>
<div class="cl code" style="top:841.10px"><span class="k">endmodule</span></div>
<div style="position:absolute;left:2150px;top:159px;width:21px;height:750px;background:#fbfbfb;box-sizing:border-box;border-left:1px solid #ebebeb;border-right:1px solid #ebebeb"></div>
<svg style="position:absolute;left:2153px;top:164.4px" width="16" height="11"><path d="M1.25 9.65L8 2.9L14.75 9.65" fill="none" stroke="#7b7b7b" stroke-width="3.25"/></svg>
<svg style="position:absolute;left:2153px;top:894.2px" width="16" height="11"><path d="M1.25 1.35L8 8.1L14.75 1.35" fill="none" stroke="#7b7b7b" stroke-width="3.25"/></svg>
<div style="position:absolute;left:2171px;top:159px;width:15px;height:15px;background:#00ff00;"></div>
<div style="position:absolute;left:851px;top:909px;width:1299px;height:21px;background:#fbfbfb;box-sizing:border-box;border-top:1px solid #ebebeb;border-bottom:2px solid #e7e7e7"></div>
<svg style="position:absolute;left:855.9px;top:912px" width="11" height="16"><path d="M9.65 1.25L2.9 8L9.65 14.75" fill="none" stroke="#7b7b7b" stroke-width="3.25"/></svg>
<svg style="position:absolute;left:2135px;top:912px" width="11" height="16"><path d="M1.35 1.25L8.1 8L1.35 14.75" fill="none" stroke="#7b7b7b" stroke-width="3.25"/></svg>
<div class="t" style="left:15.20px;top:20.94px;letter-spacing:-0.444px;color:#000;font-weight:bold;">Sources</div>
<div class="t" style="left:300.40px;top:65.94px;letter-spacing:0.000px;color:#9a9a9a;">0</div>
<div class="t" style="left:67.50px;top:107.94px;letter-spacing:-0.173px;color:#000;">Design Sources</div>
<div class="t" style="left:193.60px;top:107.94px;letter-spacing:-0.445px;color:#8a8a8a;">(1)</div>
<div class="t" style="left:117.40px;top:142.94px;letter-spacing:0.484px;color:#000;font-weight:bold;">Adder</div>
<div class="t" style="left:174.50px;top:142.94px;letter-spacing:0.225px;color:#8a8a8a;">(Adder.v)</div>
<div class="t" style="left:66.60px;top:177.94px;letter-spacing:0.088px;color:#000;">Constraints</div>
<div class="t" style="left:66.60px;top:212.94px;letter-spacing:0.066px;color:#000;">Simulation Sources</div>
<div class="t" style="left:222.60px;top:212.94px;letter-spacing:-0.445px;color:#8a8a8a;">(1)</div>
<div class="t" style="left:66.60px;top:247.94px;letter-spacing:0.075px;color:#000;">Utility Sources</div>
<div class="t" style="left:24.90px;top:453.94px;letter-spacing:0.381px;color:#000;font-weight:bold;">Hierarchy</div>
<div class="t" style="left:138.20px;top:453.94px;letter-spacing:-0.341px;color:#666;">Libraries</div>
<div class="t" style="left:242.00px;top:453.94px;letter-spacing:0.250px;color:#666;">Compile Order</div>
<div class="t" style="left:15.70px;top:523.94px;letter-spacing:-0.065px;color:#000;font-weight:bold;">Source File Properties</div>
<div class="t" style="left:40.00px;top:567.94px;letter-spacing:0.490px;color:#000;">Adder.v</div>
<div class="t" style="left:56.90px;top:625.94px;letter-spacing:-0.139px;color:#000;">Enabled</div>
<div class="t" style="left:29.30px;top:668.94px;letter-spacing:-0.066px;color:#000;">Location:</div>
<div class="t" style="left:169.40px;top:668.94px;letter-spacing:0.359px;color:#000;">D:/vm/shared/tutorial/rioAdder/rioAdder.srcs/sources_1/new</div>
<div class="t" style="left:29.40px;top:713.94px;letter-spacing:-0.003px;color:#000;">Type:</div>
<div class="t" style="left:170.20px;top:713.94px;letter-spacing:0.347px;color:#000;">Verilog</div>
<div class="t" style="left:29.30px;top:758.94px;letter-spacing:-0.108px;color:#000;">Library:</div>
<div class="t" style="left:169.50px;top:758.94px;letter-spacing:0.014px;color:#000;">xil_defaultlib</div>
<div class="t" style="left:29.30px;top:803.94px;letter-spacing:-0.802px;color:#000;">Size:</div>
<div class="t" style="left:169.80px;top:803.94px;letter-spacing:-0.629px;color:#000;">0.4 KB</div>
<div class="t" style="left:29.30px;top:848.94px;letter-spacing:0.623px;color:#000;">Modified:</div>
<div class="t" style="left:168.70px;top:848.94px;letter-spacing:0.139px;color:#000;">Today at 17:21:03 PM</div>
<div class="t" style="left:23.90px;top:899.94px;letter-spacing:0.319px;color:#000;font-weight:bold;">General</div>
<div class="t" style="left:121.00px;top:899.94px;letter-spacing:0.137px;color:#666;">Properties</div>
<div class="t" style="left:792.50px;top:20.94px;letter-spacing:0.096px;color:#8c8c8c;font-weight:bold;">Project Summary</div>
<div class="t" style="left:996.70px;top:20.94px;letter-spacing:0.483px;color:#000;font-weight:bold;">Adder.v</div>
<div class="t" style="left:801.00px;top:70.94px;letter-spacing:0.400px;color:#000;">D:/vm/shared/tutorial/rioAdder/rioAdder.srcs/sources_1/new/Adder.v</div>
</body></html>
